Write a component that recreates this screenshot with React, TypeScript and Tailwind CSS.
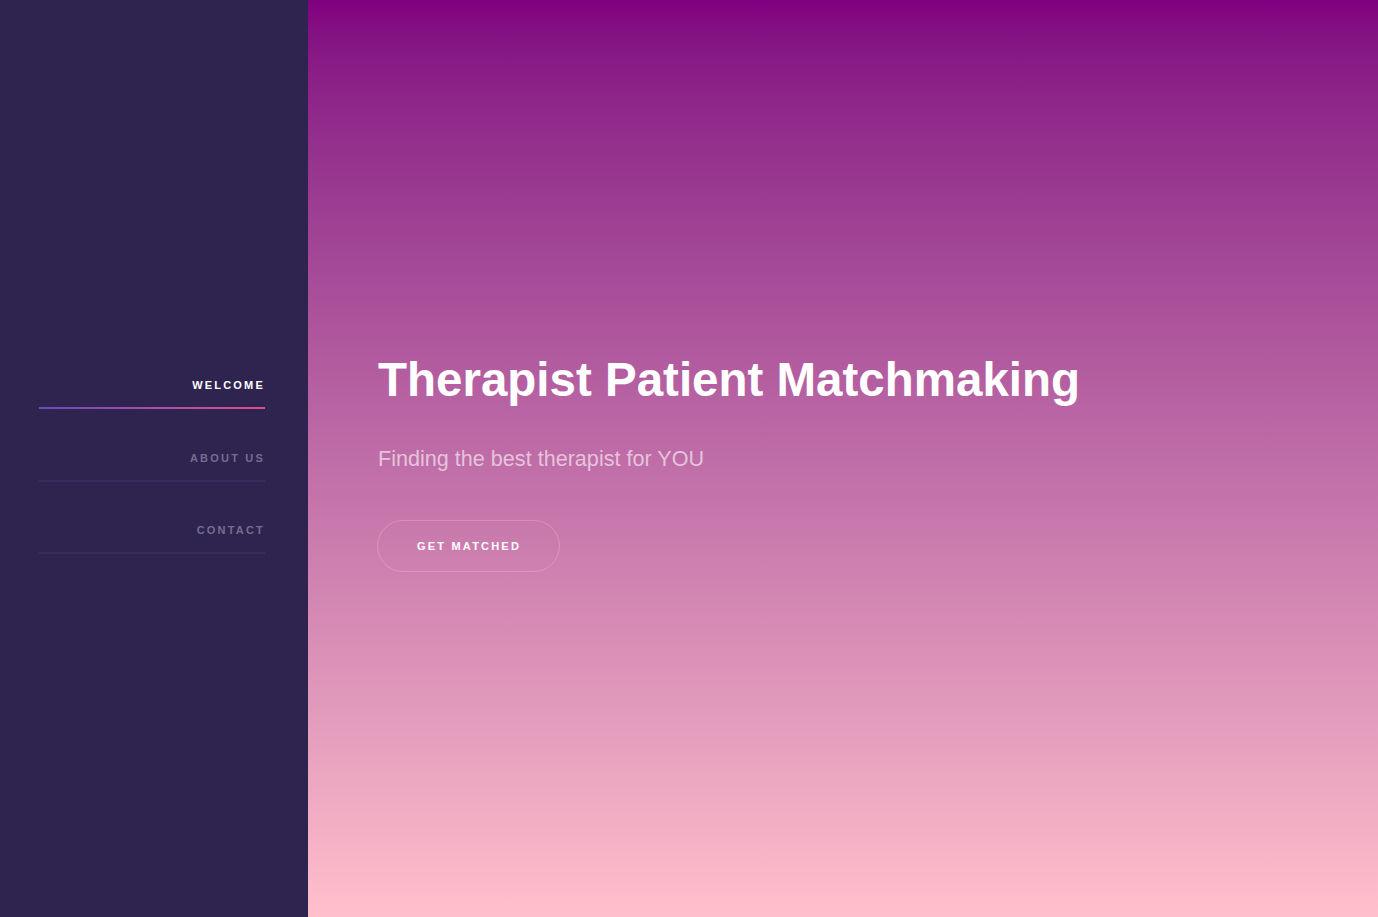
import React from 'react';

const NAV = [
  { label: 'Welcome', active: true },
  { label: 'About us', active: false },
  { label: 'Contact', active: false },
];

export default function App() {
  return (
    <div
      className="flex h-[917px] w-full overflow-hidden"
      style={{ fontFamily: '"Liberation Sans", Arial, sans-serif' }}
    >
      {/* sidebar */}
      <aside className="w-[308px] shrink-0 bg-[#2f2450] pl-[39px] pr-[43px] pt-[336.5px]">
        <nav className="flex flex-col">
          {NAV.map((item) => (
            <a key={item.label} href="#" className="block pt-[40.5px]">
              <div
                className={`text-right text-[11px] font-bold uppercase leading-4 tracking-[0.2em] ${
                  item.active ? 'text-white' : 'text-[#766c91]'
                }`}
              >
                {item.label}
              </div>
              <div
                className={`mt-[14px] h-[2px] w-full ${
                  item.active
                    ? 'bg-gradient-to-r from-[#6b4ab6] to-[#dc4a8f]'
                    : 'bg-[#3a2c5e]'
                }`}
              />
            </a>
          ))}
        </nav>
      </aside>

      {/* hero */}
      <main className="flex-1 bg-gradient-to-b from-[#800080] to-[#ffc0cb] pl-[70px] pt-[352px]">
        <h1 className="text-[47.5px] font-bold leading-[56px] text-white">
          Therapist Patient Matchmaking
        </h1>
        <p className="mt-[34px] text-[21.6px] leading-[33px] text-white/60">
          Finding the best therapist for YOU
        </p>
        <button className="-ml-px mt-[45px] flex h-[52px] items-center rounded-full border border-white/20 pl-[39px] pr-[38px] text-[11px] font-bold uppercase tracking-[0.2em] text-white">
          Get matched
        </button>
      </main>
    </div>
  );
}
